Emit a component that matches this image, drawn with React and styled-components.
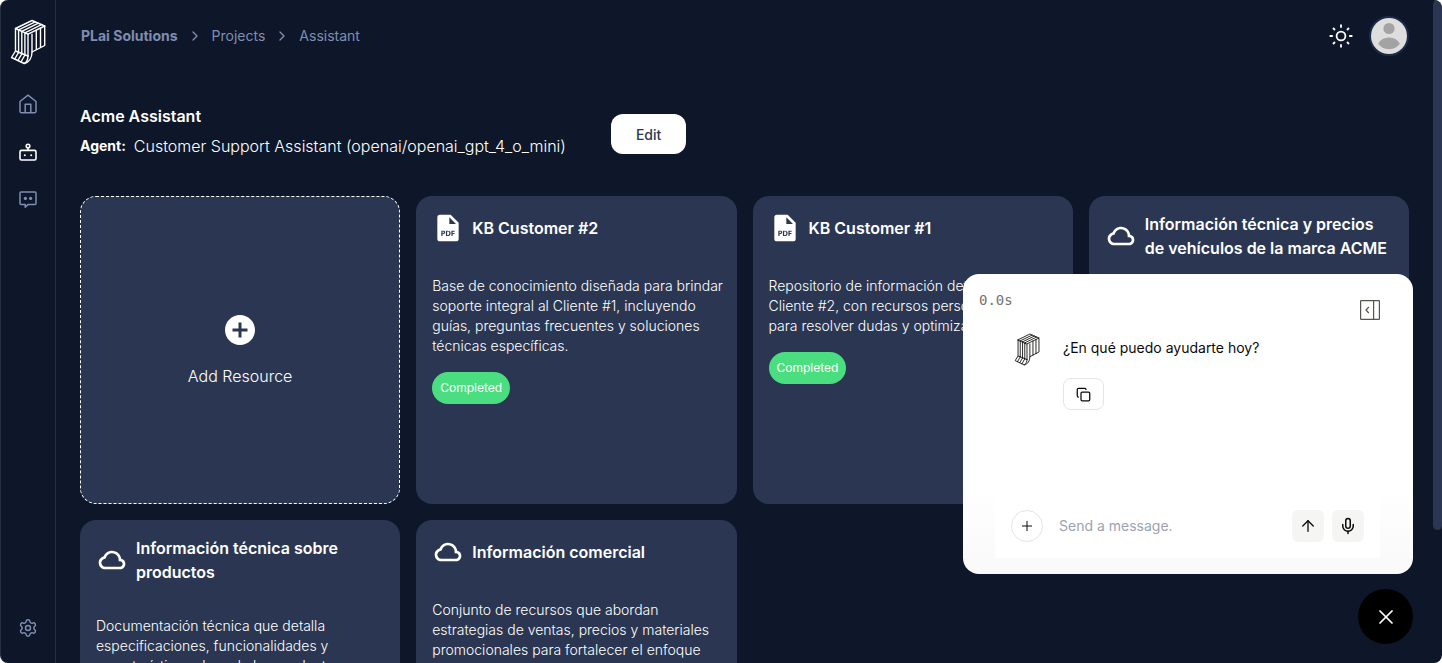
import React from "react";
import styled, { createGlobalStyle } from "styled-components";
import { BiCloud, BiSolidFilePdf } from "react-icons/bi";
import { MdAddCircle } from "react-icons/md";
import { ArrowUp, ChevronRight, Copy, Mic, Plus, Settings, X } from "lucide-react";

const background = "#0e1729";
const panel = "#2b3752";
const muted = "#7f8db0";

const GlobalStyle = createGlobalStyle`
  * {
    box-sizing: border-box;
  }

  body {
    margin: 0;
    background: #ffffff;
    color: #ffffff;
    font-family: Inter, "Liberation Sans", sans-serif;
    font-size: 16px;
  }

  button, input {
    font-family: inherit;
  }

  h1, h2, p {
    margin: 0;
  }
`;

const Shell = styled.div`
  display: flex;
  height: 100vh;
  overflow: hidden;
  background: ${background};
  border-left: 1px solid #27303f;
  border-radius: 8px;
`;

const Sidebar = styled.nav`
  display: flex;
  flex-direction: column;
  align-items: center;
  flex: none;
  width: 55px;
  padding: 19px 0 25px;
  border-right: 1px solid #27303f;
`;

const HomeLink = styled.a`
  display: flex;
  margin-bottom: 27px;
  color: #ffffff;
`;

const NavLink = styled.a`
  display: flex;
  margin-bottom: 24px;
  color: ${({ $active }) => ($active ? "#ffffff" : muted)};
`;

const BottomLink = styled(NavLink)`
  margin-top: auto;
  margin-bottom: 0;
`;

const Main = styled.main`
  flex: 1;
  min-width: 0;
  padding: 0 24px;
  overflow: hidden;
`;

const ScrollRail = styled.div`
  flex: none;
  width: 9px;
`;

const ScrollThumb = styled.div`
  height: 80%;
  background: ${panel};
  border-radius: 5px;
`;

const Header = styled.header`
  display: flex;
  align-items: center;
  justify-content: space-between;
  height: 72px;
`;

const Breadcrumb = styled.div`
  display: flex;
  align-items: center;
  gap: 9px;
  padding-left: 1px;
  color: ${muted};
  font-size: 14px;
  line-height: 20px;
`;

const Crumb = styled.a`
  color: inherit;
  font-weight: ${({ $strong }) => ($strong ? 700 : 400)};
  text-decoration: none;
`;

const HeaderActions = styled.div`
  display: flex;
  align-items: center;
  gap: 16px;
`;

const PlainButton = styled.button`
  display: flex;
  padding: 0;
  border: none;
  background: none;
  color: inherit;
  cursor: pointer;
`;

const Avatar = styled(PlainButton)`
  width: 40px;
  height: 40px;
  overflow: hidden;
  border: 2px solid #1d2b49;
  border-radius: 50%;
`;

const Intro = styled.section`
  display: flex;
  align-items: center;
  gap: 45px;
  margin: 32px 0;
`;

const Title = styled.h1`
  font-size: 16px;
  font-weight: 600;
  line-height: 24px;
`;

const Agent = styled.p`
  display: flex;
  gap: 8px;
  font-weight: 300;
  line-height: 36px;

  strong {
    font-size: 14px;
    font-weight: 700;
  }
`;

const EditButton = styled.button`
  height: 40px;
  padding: 0 25px;
  border: none;
  border-radius: 12px;
  background: #ffffff;
  color: ${panel};
  font-size: 14px;
  font-weight: 500;
  cursor: pointer;
`;

const Grid = styled.section`
  display: grid;
  grid-template-columns: repeat(4, 1fr);
  grid-auto-rows: 308px;
  gap: 16px;
`;

const AddCard = styled.button`
  display: flex;
  flex-direction: column;
  align-items: center;
  justify-content: center;
  gap: 16px;
  border: 1px dashed #ffffff;
  border-radius: 16px;
  background: ${panel};
  color: #ffffff;
  font-size: 16px;
  font-weight: 300;
  line-height: 24px;
  cursor: pointer;
`;

const Card = styled.article`
  padding: 16px 8px 16px 16px;
  border-radius: 16px;
  background: ${panel};
`;

const CardHead = styled.div`
  display: flex;
  align-items: center;
  gap: 8px;
  min-height: 32px;
  margin: 0 8px 32px 0;

  svg {
    flex: none;
  }
`;

const CardTitle = styled.h2`
  font-size: 16px;
  font-weight: 600;
  line-height: 24px;
`;

const Description = styled.p`
  margin-bottom: 16px;
  font-size: 14px;
  font-weight: 300;
  line-height: 20px;
`;

const Badge = styled.span`
  display: inline-block;
  padding: 0 8px;
  border-radius: 16px;
  background: #4ade80;
  font-size: 12px;
  line-height: 32px;
`;

const Chat = styled.aside`
  position: fixed;
  right: 29px;
  bottom: 89px;
  display: flex;
  flex-direction: column;
  justify-content: space-between;
  width: 450px;
  height: 300px;
  padding: 16px 33px 16px 32px;
  border-radius: 16px;
  background: linear-gradient(#ffffff 70%, #fafafa 95%);
  color: #0c0a09;
`;

const ChatTop = styled.div`
  display: flex;
  justify-content: space-between;
  margin: 0 0 10px -16px;
`;

const Timer = styled.span`
  color: #78716c;
  font-family: "DejaVu Sans Mono", "Liberation Mono", monospace;
  font-size: 14px;
  line-height: 20px;
`;

const CollapseButton = styled(PlainButton)`
  margin-top: 10px;
  color: #57534e;
`;

const Message = styled.div`
  display: flex;
  gap: 23px;
  padding-left: 19px;
  font-size: 14px;
  line-height: 20px;

  > svg {
    margin-top: 3px;
  }

  p {
    padding: 8px 0 20px;
  }
`;

const CopyButton = styled.button`
  display: flex;
  align-items: center;
  justify-content: center;
  width: 41px;
  height: 32px;
  padding: 0;
  border: 1px solid #e5e5e5;
  border-radius: 8px;
  background: #ffffff;
  color: #0c0a09;
  cursor: pointer;
`;

const Composer = styled.form`
  display: flex;
  align-items: center;
  gap: 8px;
  padding: 16px;
  background: #ffffff;
`;

const MessageInput = styled.input`
  flex: 1;
  min-width: 0;
  padding: 0 8px;
  border: none;
  outline: none;
  background: none;
  color: #0c0a09;
  font-size: 14px;
  line-height: 20px;

  &::placeholder {
    color: #9ca3af;
  }
`;

const ToolButton = styled.button`
  display: flex;
  align-items: center;
  justify-content: center;
  width: 32px;
  height: 32px;
  padding: 0;
  border: ${({ $round }) => ($round ? "1px solid #e5e5e5" : "none")};
  border-radius: ${({ $round }) => ($round ? "50%" : "6px")};
  background: ${({ $round }) => ($round ? "#ffffff" : "#f5f5f4")};
  color: #0c0a09;
  cursor: pointer;
`;

const CloseButton = styled.button`
  position: fixed;
  right: 29px;
  bottom: 19px;
  display: flex;
  align-items: center;
  justify-content: center;
  width: 55px;
  height: 55px;
  padding: 0;
  border: none;
  border-radius: 50%;
  background: #000000;
  color: #ffffff;
  cursor: pointer;
`;

const resources = [
  {
    type: "pdf",
    title: "KB Customer #2",
    text: "Base de conocimiento diseñada para brindar soporte integral al Cliente #1, incluyendo guías, preguntas frecuentes y soluciones técnicas específicas.",
  },
  {
    type: "pdf",
    title: "KB Customer #1",
    text: "Repositorio de información detallada del Cliente #2, con recursos personalizados y para resolver dudas y optimizar procesos.",
  },
  {
    type: "cloud",
    title: "Información técnica y precios de vehículos de la marca ACME",
    text: "",
  },
  {
    type: "cloud",
    title: "Información técnica sobre productos",
    text: "Documentación técnica que detalla especificaciones, funcionalidades y características clave de los productos.",
  },
  {
    type: "cloud",
    title: "Información comercial",
    text: "Conjunto de recursos que abordan estrategias de ventas, precios y materiales promocionales para fortalecer el enfoque comercial.",
  },
];

function Logo({ width, height, stroke }) {
  return (
    <svg width={width} height={height} viewBox="0 0 36 46" fill="none" stroke="currentColor" strokeWidth={stroke} strokeLinejoin="round" strokeLinecap="round">
      <path d="M5.5 9.5 22 1.5 34.7 7 18 15.2Z" />
      <path d="M8.6 10.9 25.2 2.9M11.8 12.3 28.4 4.2M14.9 13.8 31.5 5.6" />
      <path d="M5.5 9.5V32M8.6 11V33.5M11.8 12.4V35M14.9 13.8V36.5M18 15.2V37" />
      <path d="M34.7 7V26.5L22 33V15.2M26.3 11.2V30.8M30.5 9.1V28.6" />
      <path d="M22 33C22 39 19 43.5 14.2 44.5L1.5 38.5 5.5 32 18 37" />
      <path d="M4.7 40 8.6 33.3M7.9 41.5 11.8 34.8M11 43 14.9 36M14.2 44.5C17 43 18 40 18 37" />
    </svg>
  );
}

function HomeIcon() {
  return (
    <svg width="24" height="24" viewBox="0 0 24 24" fill="none" stroke="currentColor" strokeWidth="1.5" strokeLinejoin="round">
      <path d="M4 9.5 12 3.2 20 9.5V19.2Q20 20.8 18.4 20.8H5.6Q4 20.8 4 19.2Z" />
      <path d="M9.2 20.8V12.2H14.8V20.8" />
    </svg>
  );
}

function BotIcon() {
  return (
    <svg width="24" height="24" viewBox="0 0 24 24" fill="none" stroke="currentColor" strokeWidth="1.6">
      <rect x="4" y="10.4" width="16" height="9.6" rx="1.5" />
      <path d="M12 7.8V10.4" />
      <circle cx="12" cy="6" r="1.8" />
      <circle cx="8.8" cy="15.2" r="1" fill="currentColor" stroke="none" />
      <circle cx="15.2" cy="15.2" r="1" fill="currentColor" stroke="none" />
    </svg>
  );
}

function ChatIcon() {
  return (
    <svg width="24" height="24" viewBox="0 0 24 24" fill="none" stroke="currentColor" strokeWidth="1.5" strokeLinejoin="round">
      <path d="M5 4H19Q20 4 20 5V15.6Q20 16.6 19 16.6H12L9.2 19.2V16.6H5Q4 16.6 4 15.6V5Q4 4 5 4Z" />
      <circle cx="9.4" cy="10.4" r="1.6" fill="currentColor" stroke="none" />
      <circle cx="14.6" cy="10.4" r="1.6" fill="currentColor" stroke="none" />
    </svg>
  );
}

function SunIcon() {
  return (
    <svg width="24" height="24" viewBox="0 0 24 24" fill="none" stroke="currentColor" strokeWidth="1.8">
      <circle cx="12" cy="12" r="4.4" />
      <path d="M12 .6V3.8M12 20.2V23.4M.6 12H3.8M20.2 12H23.4M4 4 6 6M18 18 20 20M20 4 18 6M4 20 6 18" />
    </svg>
  );
}

function PersonIcon() {
  return (
    <svg width="36" height="36" viewBox="0 0 36 36">
      <rect width="36" height="36" fill="#dedede" />
      <circle cx="18" cy="10.5" r="5.6" fill="#a3a3a3" />
      <path d="M7.2 25.5C9.5 21.5 13 19.5 18 19.5S26.5 21.5 28.8 25.5C26.5 29 23 31.2 18 31.2S9.5 29 7.2 25.5Z" fill="#a3a3a3" />
    </svg>
  );
}

function CollapseIcon() {
  return (
    <svg width="20" height="20" viewBox="0 0 20 20" fill="none" stroke="currentColor" strokeWidth="1.2">
      <rect x=".6" y=".6" width="18.8" height="18.8" rx=".6" />
      <path d="M13.6 .6V19.4M8.8 7 6 10 8.8 13" />
    </svg>
  );
}

function Resource({ resource }) {
  return (
    <Card>
      <CardHead>
        {resource.type === "pdf" ? <BiSolidFilePdf size={32} /> : <BiCloud size={32} />}
        <CardTitle>{resource.title}</CardTitle>
      </CardHead>
      <Description>{resource.text}</Description>
      <Badge>Completed</Badge>
    </Card>
  );
}

function App() {
  return (
    <>
      <GlobalStyle />
      <Shell>
        <Sidebar>
          <HomeLink href="#" aria-label="PLai">
            <Logo width={36} height={46} stroke={1.4} />
          </HomeLink>
          <NavLink href="#home" aria-label="Home"><HomeIcon /></NavLink>
          <NavLink href="#assistants" aria-label="Assistants" $active><BotIcon /></NavLink>
          <NavLink href="#chats" aria-label="Chats"><ChatIcon /></NavLink>
          <BottomLink href="#settings" aria-label="Settings"><Settings size={20} strokeWidth={1.75} /></BottomLink>
        </Sidebar>

        <Main>
          <Header>
            <Breadcrumb>
              <Crumb href="#" $strong>PLai Solutions</Crumb>
              <ChevronRight size={16} />
              <Crumb href="#projects">Projects</Crumb>
              <ChevronRight size={16} />
              <Crumb href="#assistant">Assistant</Crumb>
            </Breadcrumb>
            <HeaderActions>
              <PlainButton type="button" aria-label="Theme"><SunIcon /></PlainButton>
              <Avatar type="button" aria-label="Account"><PersonIcon /></Avatar>
            </HeaderActions>
          </Header>

          <Intro>
            <div>
              <Title>Acme Assistant</Title>
              <Agent>
                <strong>Agent:</strong>
                <span>Customer Support Assistant (openai/openai_gpt_4_o_mini)</span>
              </Agent>
            </div>
            <EditButton type="button">Edit</EditButton>
          </Intro>

          <Grid>
            <AddCard type="button">
              <MdAddCircle size={36} />
              Add Resource
            </AddCard>
            {resources.map((resource) => (
              <Resource key={resource.title} resource={resource} />
            ))}
          </Grid>
        </Main>

        <ScrollRail>
          <ScrollThumb />
        </ScrollRail>
      </Shell>

      <Chat>
        <div>
          <ChatTop>
            <Timer>0.0s</Timer>
            <CollapseButton type="button" aria-label="Collapse"><CollapseIcon /></CollapseButton>
          </ChatTop>
          <Message>
            <Logo width={26} height={33} stroke={1.2} />
            <div>
              <p>¿En qué puedo ayudarte hoy?</p>
              <CopyButton type="button" aria-label="Copy"><Copy size={15} strokeWidth={2} /></CopyButton>
            </div>
          </Message>
        </div>
        <Composer>
          <ToolButton type="button" aria-label="Attach" $round><Plus size={16} strokeWidth={1.5} /></ToolButton>
          <MessageInput type="text" aria-label="Message" placeholder="Send a message." />
          <ToolButton type="submit" aria-label="Send"><ArrowUp size={18} strokeWidth={1.75} /></ToolButton>
          <ToolButton type="button" aria-label="Record"><Mic size={18} strokeWidth={2} /></ToolButton>
        </Composer>
      </Chat>
      <CloseButton type="button" aria-label="Close chat"><X size={24} strokeWidth={1.75} /></CloseButton>
    </>
  );
}

export default App;
